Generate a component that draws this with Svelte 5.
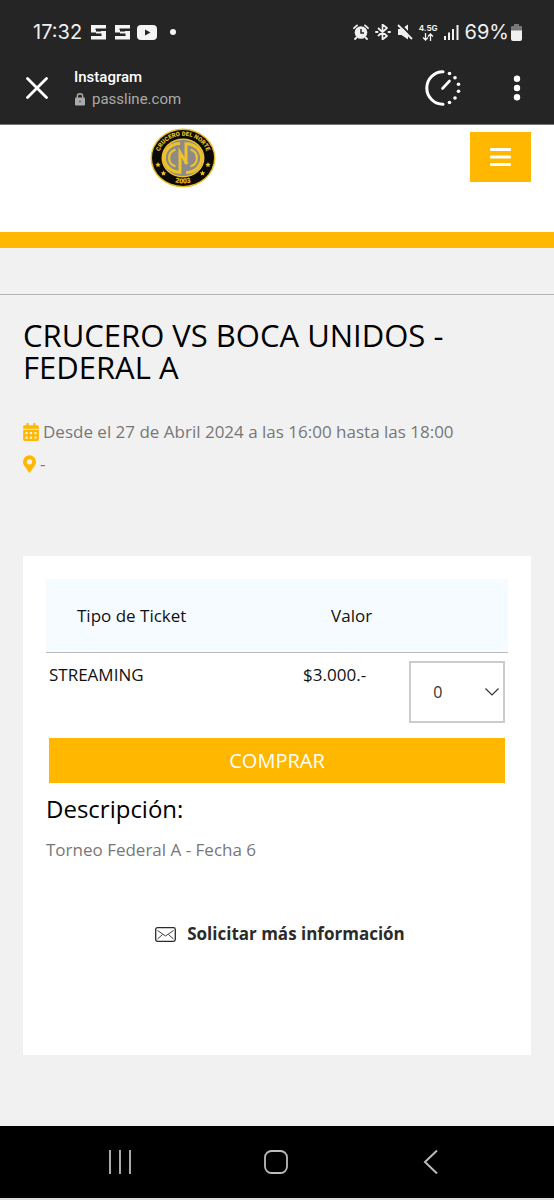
<script>
  let quantity = $state('0');

  const options = ['0', '1', '2', '3', '4', '5'];

  const tickets = [{ name: 'STREAMING', price: '$3.000.-' }];
</script>

<div class="screen">
  <div class="status-bar">
    <div class="status-left">
      <span>17:32</span>
      {#each [1, 2] as n (n)}
        <svg width="15" height="16" viewBox="0 0 15 16" fill="#f4f4f4">
          <path d="M0 1h15v3.500H4.500v2H0zM0 6h5v2.500H0zM10 7h5v8.500H0V12h10.500V9.500H5V7.500h5z" />
        </svg>
      {/each}
      <svg class="video-icon" width="20" height="15" viewBox="0 0 20 15">
        <rect width="20" height="15" rx="4" fill="#f4f4f4" />
        <path d="M8 4.500l5.500 3L8 10.500z" fill="#252525" />
      </svg>
      <span class="dot"></span>
    </div>
    <div class="status-right">
      <svg width="16" height="16" viewBox="0 0 16 16">
        <circle cx="8" cy="8.500" r="6.300" fill="#f0f0f0" />
        <path d="M1 4.200L4 1.400M15 4.200L12 1.400M3.500 13.500L2 15M12.500 13.500L14 15" stroke="#f0f0f0" stroke-width="1.800" stroke-linecap="round" />
        <path d="M8 5v4h3" fill="none" stroke="#252525" stroke-width="1.500" />
      </svg>
      <svg width="16" height="16" viewBox="0 0 16 16" fill="none" stroke="#f0f0f0" stroke-width="1.700">
        <path d="M3 4l9 8-4.500 3.500V.5L12 4l-9 8" stroke-linejoin="round" />
        <path d="M1 8h1.500M13.500 8H15" stroke-width="2" stroke-linecap="round" />
      </svg>
      <svg width="16" height="16" viewBox="0 0 16 16">
        <path d="M1 5h3.500L11 .5v15L4.500 11H1z" fill="#f0f0f0" />
        <path d="M2.500 -.5L16 13.500" stroke="#252525" stroke-width="2" />
        <path d="M1 1l14 14" stroke="#f0f0f0" stroke-width="1.800" />
      </svg>
      <span class="network">
        4.5G
        <svg width="12" height="8" viewBox="0 0 12 8" fill="none" stroke="#f0f0f0" stroke-width="1.300">
          <path d="M3.500 0v7M1 4.500L3.500 7L6 4.500M8.500 8V1M6 3.500L8.500 1L11 3.500" />
        </svg>
      </span>
      <svg width="15" height="16" viewBox="0 0 15 16" fill="#f0f0f0">
        <path d="M0 12h2v4H0zM4 8.500h2V16H4zM8 5h2v11H8zM12.500 1h2v15h-2z" />
      </svg>
      <span class="battery-text">69%</span>
      <svg width="11" height="17" viewBox="0 0 11 17">
        <path d="M3 0h5v2h2a1 1 0 0 1 1 1v4H0V3a1 1 0 0 1 1-1h2z" fill="#777" />
        <path d="M0 6.500h11V15a2 2 0 0 1-2 2H2a2 2 0 0 1-2-2z" fill="#f0f0f0" />
      </svg>
    </div>
  </div>

  <header class="browser-bar">
    <button class="icon-btn" aria-label="Cerrar">
      <svg width="22" height="22" viewBox="0 0 22 22" stroke="#fff" stroke-width="2.800" stroke-linecap="round">
        <path d="M1.500 1.500l19 19M20.500 1.500l-19 19" />
      </svg>
    </button>
    <div class="site">
      <div class="site-name">Instagram</div>
      <div class="site-url">
        <svg width="10" height="13" viewBox="0 0 10 13">
          <rect y="4.500" width="10" height="8" rx="1.200" fill="#aaa" />
          <path d="M2.300 5V3.500a2.700 2.700 0 0 1 5.400 0V5" fill="none" stroke="#aaa" stroke-width="1.400" />
          <circle cx="5" cy="8.500" r="1" fill="#666" />
        </svg>
        <span>passline.com</span>
      </div>
    </div>
    <button class="icon-btn gauge" aria-label="Rendimiento">
      <svg width="36" height="36" viewBox="0 0 36 36">
        <path d="M18 1.800a16.200 16.200 0 0 0 0 32.400" fill="none" stroke="#fff" stroke-width="3" stroke-linecap="round" />
        <path d="M17.500 18.500l7-7.500" stroke="#fff" stroke-width="2.600" stroke-linecap="round" />
        <g fill="#fff">
          <circle cx="24.500" cy="3.500" r="1.800" />
          <circle cx="30" cy="7.800" r="1.800" />
          <circle cx="33.500" cy="14.300" r="1.800" />
          <circle cx="33.500" cy="21.300" r="1.800" />
          <circle cx="30" cy="28" r="1.800" />
          <circle cx="24.500" cy="32.500" r="1.800" />
        </g>
      </svg>
    </button>
    <button class="icon-btn" aria-label="Más opciones">
      <svg width="8" height="26" viewBox="0 0 8 26" fill="#fff">
        <circle cx="4" cy="3.700" r="3.200" />
        <circle cx="4" cy="13" r="3.200" />
        <circle cx="4" cy="22.300" r="3.200" />
      </svg>
    </button>
  </header>

  <div class="site-header">
    <a class="logo" href="/" aria-label="Crucero del Norte">
      <svg width="66" height="60" viewBox="0 0 66 60">
        <defs>
          <path id="top-arc" d="M10.300 38A24.500 22 0 1 1 55.700 38" />
          <path id="bottom-arc" d="M16 50Q33 61 50 50" />
        </defs>
        <ellipse cx="33" cy="30" rx="32.500" ry="29.500" fill="#e9bd28" />
        <ellipse cx="33" cy="30" rx="31" ry="28" fill="#0c0a06" />
        <ellipse cx="33" cy="30" rx="21.500" ry="19.500" fill="#edc22b" />
        <ellipse cx="33" cy="30" rx="20" ry="18" fill="#8d8b88" />
        <g fill="none" stroke="#edc22b">
          <path d="M30 15.500A15.500 14.300 0 0 0 30 44.300V24.500L37 36" stroke-width="3" />
          <path d="M36 44.500A15.500 14.300 0 0 0 36 15.700V36" stroke-width="3" />
          <path d="M25.500 21.500A9.500 9 0 0 0 25.500 38.500M40.500 38.500A9.500 9 0 0 0 40.500 21.500" stroke-width="2.200" />
        </g>
        <g fill="#edc22b" font-family="Roboto, sans-serif" font-weight="900" font-size="6">
          <text text-anchor="middle"><textPath href="#top-arc" startOffset="50%">CRUCERO DEL NORTE</textPath></text>
          <text text-anchor="middle" font-size="7"><textPath href="#bottom-arc" startOffset="50%">2003</textPath></text>
          <path d="M8 34l.8 1.700 1.900.2-1.400 1.300.4 1.900L8 38.200l-1.700.9.4-1.900-1.400-1.300 1.900-.2z" />
          <path d="M58 34l.8 1.700 1.900.2-1.400 1.300.4 1.900-1.700-.9-1.700.9.4-1.900-1.400-1.300 1.900-.2z" />
          <path d="M13.500 42.500l.8 1.700 1.900.2-1.400 1.300.4 1.900-1.700-.9-1.700.9.4-1.900-1.400-1.300 1.900-.2z" />
          <path d="M52.500 42.500l.8 1.700 1.900.2-1.400 1.300.4 1.900-1.700-.9-1.700.9.4-1.900-1.400-1.300 1.900-.2z" />
        </g>
      </svg>
    </a>
    <button class="menu-btn" aria-label="Menú">
      <svg width="21" height="18" viewBox="0 0 21 18" fill="#fff">
        <rect width="21" height="3" rx="1" />
        <rect y="7.500" width="21" height="3" rx="1" />
        <rect y="15" width="21" height="3" rx="1" />
      </svg>
    </button>
  </div>

  <main>
    <section class="event">
      <h1>CRUCERO VS BOCA UNIDOS - FEDERAL A</h1>
      <p>
        <svg width="16" height="18" viewBox="0 0 448 512" fill="#ffb700">
          <path d="M0 464c0 26.500 21.500 48 48 48h352c26.500 0 48-21.500 48-48V192H0zM320 268q0-12 12-12h40q12 0 12 12v40q0 12-12 12h-40q-12 0-12-12zm0 128q0-12 12-12h40q12 0 12 12v40q0 12-12 12h-40q-12 0-12-12zM192 268q0-12 12-12h40q12 0 12 12v40q0 12-12 12h-40q-12 0-12-12zm0 128q0-12 12-12h40q12 0 12 12v40q0 12-12 12h-40q-12 0-12-12zM64 268q0-12 12-12h40q12 0 12 12v40q0 12-12 12H76q-12 0-12-12zm0 128q0-12 12-12h40q12 0 12 12v40q0 12-12 12H76q-12 0-12-12zM400 64h-48V16q0-16-16-16h-32q-16 0-16 16v48H160V16q0-16-16-16h-32Q96 0 96 16v48H48C21.500 64 0 85.500 0 112v48h448v-48c0-26.500-21.500-48-48-48z" fill-rule="evenodd" />
        </svg>
        <span>Desde el 27 de Abril 2024 a las 16:00 hasta las 18:00</span>
      </p>
      <p>
        <svg width="13" height="18" viewBox="0 0 384 512" fill="#ffb700">
          <path d="M172 502C27 291 0 269 0 192a192 192 0 0 1 384 0c0 77-27 99-172 310-10 13-30 13-40 0zm20-230a80 80 0 1 0 0-160 80 80 0 0 0 0 160z" />
        </svg>
        <span>-</span>
      </p>
    </section>

    <section class="card">
      <table>
        <colgroup>
          <col class="col-type" />
          <col class="col-price" />
          <col class="col-qty" />
        </colgroup>
        <thead>
          <tr>
            <th>Tipo de Ticket</th>
            <th>Valor</th>
            <th></th>
          </tr>
        </thead>
        <tbody>
          {#each tickets as ticket (ticket.name)}
            <tr>
              <td>{ticket.name}</td>
              <td>{ticket.price}</td>
              <td class="qty">
                <select bind:value={quantity} aria-label="Cantidad">
                  {#each options as option (option)}
                    <option value={option}>{option}</option>
                  {/each}
                </select>
                <svg class="chevron" width="14" height="8" viewBox="0 0 14 8" fill="none" stroke="#333" stroke-width="1.200">
                  <path d="M.5 .5L7 7l6.500-6.500" />
                </svg>
              </td>
            </tr>
          {/each}
        </tbody>
      </table>
      <button class="buy">COMPRAR</button>
      <h2>Descripción:</h2>
      <p class="description">Torneo Federal A - Fecha 6</p>
      <a class="more-info" href="#info">
        <svg width="21" height="15" viewBox="0 0 21 15" fill="none" stroke="#2b2b2b">
          <rect x=".7" y=".7" width="19.600" height="13.600" rx="1.800" stroke-width="1.300" />
          <path d="M2.500 3.500l8 5.500 8-5.500M2.500 12l5-4.500M18.500 12l-5-4.500" stroke-width=".9" />
        </svg>
        <span>Solicitar más información</span>
      </a>
    </section>
  </main>

  <nav class="android-nav">
    <button class="icon-btn" aria-label="Recientes">
      <svg width="24" height="24" viewBox="0 0 24 24" stroke="#bbb" stroke-width="1.800">
        <path d="M2 0v24M12 0v24M22 0v24" />
      </svg>
    </button>
    <button class="icon-btn" aria-label="Inicio">
      <svg width="24" height="24" viewBox="0 0 24 24" fill="none" stroke="#bbb" stroke-width="1.800">
        <rect x="1" y="1" width="22" height="22" rx="6.500" />
      </svg>
    </button>
    <button class="icon-btn" aria-label="Atrás">
      <svg width="24" height="24" viewBox="0 0 24 24" fill="none" stroke="#bbb" stroke-width="2">
        <path d="M18 .5L6 12l12 11.500" />
      </svg>
    </button>
  </nav>
</div>

<style>
  :global(body) {
    margin: 0;
    background: #f1f1f1;
  }

  .screen {
    display: flex;
    flex-direction: column;
    min-height: 100vh;
    font-family: 'Open Sans', sans-serif;
    font-size: 17px;
    color: #111;
  }

  svg {
    display: block;
    flex-shrink: 0;
  }

  button {
    border: 0;
    padding: 0;
    font-family: inherit;
    cursor: pointer;
  }

  .icon-btn {
    display: flex;
    background: none;
  }

  .status-bar {
    display: flex;
    justify-content: space-between;
    align-items: center;
    height: 64px;
    box-sizing: border-box;
    padding: 0 32px 0 33px;
    background: #252525;
    color: #f0f0f0;
    font-family: Inter, sans-serif;
    font-size: 20px;
  }

  .status-left,
  .status-right {
    display: flex;
    align-items: center;
    gap: 6px;
  }

  .status-left {
    gap: 9px;
  }

  .video-icon {
    margin-left: -2px;
  }

  .dot {
    width: 6px;
    height: 6px;
    margin-left: 4px;
    border-radius: 50%;
    background: #f4f4f4;
  }

  .network {
    display: flex;
    flex-direction: column;
    align-items: center;
    font-size: 8px;
    font-weight: 700;
    line-height: 9px;
  }

  .battery-text {
    margin-right: -4px;
  }

  .browser-bar {
    display: flex;
    align-items: center;
    height: 61px;
    box-sizing: border-box;
    padding: 0 33px 12px 26px;
    background: #252525;
    border-bottom: 1px solid #777;
    font-family: Roboto, sans-serif;
  }

  .site {
    flex: 1;
    margin-left: 26px;
    font-size: 15px;
    line-height: 22px;
  }

  .site-name {
    color: #fff;
    font-weight: 500;
  }

  .site-url {
    display: flex;
    align-items: center;
    gap: 7px;
    padding-left: 1px;
    color: #aaa;
  }

  .gauge {
    margin-right: 52px;
  }

  .site-header {
    display: flex;
    align-items: flex-start;
    justify-content: space-between;
    height: 107px;
    box-sizing: border-box;
    padding: 3px 23px 0;
    background: #fff;
  }

  .logo {
    margin-left: 25%;
  }

  .menu-btn {
    display: flex;
    align-items: center;
    justify-content: center;
    width: 61px;
    height: 50px;
    margin-top: 4px;
    background: #ffb700;
  }

  main {
    flex: 1;
    border-top: 16px solid #ffb700;
    background: #f1f1f1;
  }

  .event {
    margin-top: 46px;
    padding: 24px 23px 0;
    border-top: 1px solid #b5b5b5;
  }

  h1 {
    margin: 0 0 33px;
    font-size: 31px;
    font-weight: 400;
    line-height: 32px;
    color: #000;
  }

  .event p {
    display: flex;
    align-items: center;
    gap: 4px;
    margin: 0;
    line-height: 32px;
    color: #777;
  }

  .card {
    margin: 76px 23px 71px;
    padding: 23px 23px 107px;
    background: #fff;
  }

  table {
    width: 100%;
    table-layout: fixed;
    border-collapse: collapse;
  }

  .col-type {
    width: 55%;
  }

  .col-price {
    width: 23%;
  }

  .col-qty {
    width: 22%;
  }

  th {
    height: 73px;
    padding: 0 0 0 31px;
    background: #f6fbff;
    border-bottom: 1px solid #bbb;
    font-weight: 400;
    text-align: left;
  }

  td {
    padding: 8px 3px 0;
    line-height: 28px;
    vertical-align: top;
  }

  .qty {
    position: relative;
  }

  select {
    display: block;
    width: 100%;
    height: 62px;
    padding: 0 22px;
    appearance: none;
    background: #fff;
    border: 2px solid #ccc;
    border-radius: 0;
    font-family: inherit;
    font-size: 16px;
    color: #333;
  }

  .chevron {
    position: absolute;
    right: 9px;
    top: 35px;
    pointer-events: none;
  }

  .buy {
    display: block;
    width: calc(100% - 6px);
    height: 45px;
    margin: 15px 3px 8px;
    background: #ffb700;
    color: #fff;
    font-size: 20px;
  }

  h2 {
    margin: 0;
    font-size: 24px;
    font-weight: 400;
    line-height: 36px;
    color: #000;
  }

  .description {
    margin: 7px 0 0;
    line-height: 32px;
    color: #777;
  }

  .more-info {
    display: flex;
    align-items: center;
    justify-content: center;
    gap: 11px;
    margin-top: 54px;
    padding-left: 6px;
    line-height: 28px;
    font-weight: 700;
    color: #2b2b2b;
    text-decoration: none;
  }

  .android-nav {
    display: flex;
    align-items: center;
    justify-content: space-between;
    height: 74px;
    box-sizing: border-box;
    padding: 0 111px 0 108px;
    background: #000;
    border-bottom: 2px solid #ddd;
  }
</style>
